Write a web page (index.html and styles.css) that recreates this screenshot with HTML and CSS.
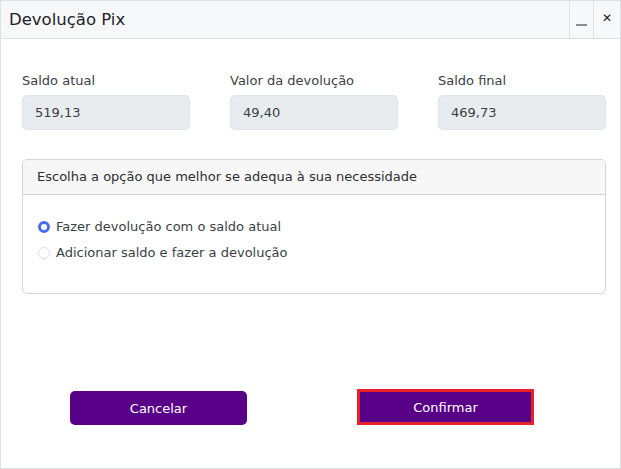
FILE: index.html
```html
<!DOCTYPE html>
<html>
    <head>
        <meta charset="UTF-8" />
        <title>Devolução Pix</title>
        <link rel="stylesheet" href="styles.css">
    </head>
    <body>
        <div class="window">
            <div class="titlebar">
                <p class="title">Devolução Pix</p>
                <div class="ctl minimize"><span class="dash"></span></div>
                <div class="ctl close">&#x2715;</div>
            </div>

            <div class="content">
                <div class="fields">
                    <div class="field">
                        <label>Saldo atual</label>
                        <div class="value">519,13</div>
                    </div>
                    <div class="field">
                        <label>Valor da devolução</label>
                        <div class="value">49,40</div>
                    </div>
                    <div class="field">
                        <label>Saldo final</label>
                        <div class="value">469,73</div>
                    </div>
                </div>

                <div class="card">
                    <div class="card-head">Escolha a opção que melhor se adequa à sua necessidade</div>
                    <div class="card-body">
                        <label class="option"><span class="radio checked"></span>Fazer devolução com o saldo atual</label>
                        <label class="option"><span class="radio"></span>Adicionar saldo e fazer a devolução</label>
                    </div>
                </div>

                <div class="actions">
                    <button class="btn">Cancelar</button>
                    <button class="btn focused">Confirmar</button>
                </div>
            </div>
        </div>
    </body>
</html>
```

FILE: styles.css
```css
* {
  margin: 0;
  padding: 0;
  box-sizing: border-box;
}

html, body {
  width: 100%;
  height: 100%;
  font-family: "DejaVu Sans", Verdana, sans-serif;
  color: #212529;
  background: #fff;
}

.window {
  height: 469px;
  border: 1px solid #dde1e6;
  display: flex;
  flex-direction: column;
}

.titlebar {
  height: 38px;
  display: flex;
  background: #f7f8fa;
  border-bottom: 1px solid #dde1e6;
}

.title {
  flex: 1;
  padding-left: 8px;
  font-size: 16.5px;
  line-height: 37px;
  color: #1d232b;
}

.ctl {
  border-left: 1px solid #dde1e6;
  display: flex;
  justify-content: center;
}

.minimize {
  width: 24px;
  align-items: flex-end;
  padding-bottom: 12px;
}

.dash {
  width: 11px;
  height: 2px;
  background: #8a8f96;
}

.close {
  width: 27px;
  font-size: 12px;
  font-weight: bold;
  line-height: 35px;
  color: #111c2a;
}

.content {
  flex: 1;
  padding: 33px 14px 43px 21px;
  display: flex;
  flex-direction: column;
}

.fields {
  display: grid;
  grid-template-columns: 168px 168px 168px;
  column-gap: 40px;
}

.field label {
  display: block;
  font-size: 13px;
  color: #3a3f44;
  margin-bottom: 6px;
  line-height: 17px;
}

.value {
  height: 35px;
  background: #e9ecef;
  border: 1px solid #dfe2e6;
  border-radius: 5px;
  padding-left: 12px;
  font-size: 13px;
  line-height: 33px;
  color: #3a3f44;
}

.card {
  margin-top: 29px;
  border: 1px solid #d5d5d5;
  border-radius: 5px;
  overflow: hidden;
}

.card-head {
  height: 35px;
  background: #f7f7f7;
  border-bottom: 1px solid #d5d5d5;
  padding-left: 14px;
  font-size: 13px;
  line-height: 34px;
  color: #2b2f33;
}

.card-body {
  padding: 23px 14px 32px 15px;
  display: flex;
  flex-direction: column;
  gap: 9px;
}

.option {
  display: flex;
  align-items: center;
  font-size: 13px;
  line-height: 17px;
  color: #3a3f44;
}

.radio {
  width: 12px;
  height: 12px;
  border-radius: 50%;
  border: 1px solid #d9dcdf;
  margin-right: 6px;
}

.radio.checked {
  border: 3.5px solid #4a6cf2;
  background: #fff;
}

.actions {
  margin-top: auto;
  display: flex;
  align-items: flex-end;
  padding-left: 48px;
  gap: 110px;
}

.btn {
  width: 177px;
  height: 34px;
  border: 0;
  border-radius: 5px;
  background: #580087;
  color: #fff;
  font-family: "DejaVu Sans", Verdana, sans-serif;
  font-size: 13px;
}

.btn.focused {
  height: 36px;
  border-radius: 0;
  border: 3px solid #e8202a;
}
```
